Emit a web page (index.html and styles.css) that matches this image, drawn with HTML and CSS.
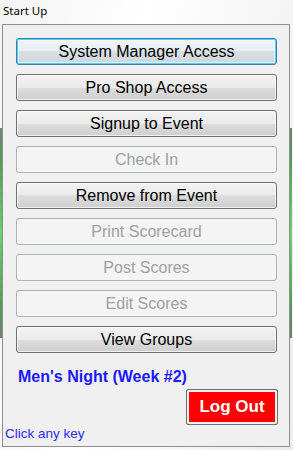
FILE: index.html
```html
<!DOCTYPE html>
<html>
<head>
<meta charset="utf-8">
<link rel="stylesheet" href="styles.css">
</head>
<body>
<div class="window">
  <div class="title">Start Up</div>
  <div class="panel">
    <div class="buttons">
      <button class="btn focus">System Manager Access</button>
      <button class="btn">Pro Shop Access</button>
      <button class="btn">Signup to Event</button>
      <button class="btn disabled">Check In</button>
      <button class="btn">Remove from Event</button>
      <button class="btn disabled">Print Scorecard</button>
      <button class="btn disabled">Post Scores</button>
      <button class="btn disabled">Edit Scores</button>
      <button class="btn">View Groups</button>
    </div>
    <div class="event">Men's Night (Week #2)</div>
    <div class="logout-row"><button class="logout">Log Out</button></div>
    <div class="hint">Click any key</div>
  </div>
</div>
</body>
</html>
```
FILE: styles.css
```css
html, body {
  margin: 0;
  padding: 0;
}
body {
  width: 293px;
  height: 450px;
  overflow: hidden;
  background: linear-gradient(100deg, #f4f4f4 0%, #ffffff 40%, #f7f7f7 70%, #ececec 100%);
  position: relative;
}
body::before, body::after {
  content: "";
  position: absolute;
  top: 128px;
  height: 210px;
  width: 2px;
  background: linear-gradient(180deg, rgba(40,40,40,0.6) 0%, #4fa04f 15%, #6ccf6c 50%, #4fa04f 85%, rgba(40,40,40,0.6) 100%);
}
body::before { left: 0; }
body::after { right: 1px; }
.window {
  display: flex;
  flex-direction: column;
}
.title {
  height: 24px;
  box-sizing: border-box;
  padding: 4px 0 0 3px;
  font-family: "Noto Sans", "DejaVu Sans", sans-serif;
  font-size: 11.5px;
  line-height: 14px;
  color: #000;
}
.panel {
  margin-left: 2px;
  width: 288px;
  height: 423px;
  box-sizing: border-box;
  border: 1px solid #8e8f8f;
  background: #f0f0f0;
  display: flex;
  flex-direction: column;
  position: relative;
  z-index: 1;
}
.buttons {
  display: flex;
  flex-direction: column;
  gap: 9px;
  padding: 13px 0 0 13px;
}
.btn {
  width: 261px;
  height: 27px;
  box-sizing: border-box;
  margin: 0;
  padding: 0;
  border: 1px solid #707070;
  border-radius: 3px;
  background: linear-gradient(180deg, #f2f2f2 0%, #ebebeb 50%, #dddddd 50%, #cfcfcf 100%);
  box-shadow: inset 0 0 0 1px rgba(255,255,255,0.7);
  font-family: "Liberation Sans", Arial, sans-serif;
  font-size: 16px;
  line-height: 25px;
  color: #000;
  text-align: center;
}
.btn.focus {
  border-color: #3c7fb1;
  box-shadow: inset 0 0 0 1px #48d2fa, inset 0 0 0 2px rgba(255,255,255,0.5);
  background: linear-gradient(180deg, #f0f5f8 0%, #e6edf1 50%, #d9e0e4 50%, #cfd6da 100%);
}
.btn.disabled {
  border-color: #adb2b5;
  background: #f4f4f4;
  box-shadow: none;
  color: #a0a0a0;
}
.event {
  margin: 14px 0 0 15px;
  font-family: "Liberation Sans", Arial, sans-serif;
  font-weight: bold;
  font-size: 16px;
  line-height: 19px;
  color: #1a1aff;
}
.logout-row {
  display: flex;
  justify-content: flex-end;
  padding-right: 11px;
  margin-top: 3px;
}
.logout {
  width: 92px;
  height: 36px;
  box-sizing: border-box;
  margin: 0;
  padding: 0;
  border: 1px solid #707070;
  border-radius: 2px;
  background: #ff0000;
  box-shadow: inset 0 0 0 2px #f0f0f0;
  font-family: "Liberation Sans", Arial, sans-serif;
  font-weight: bold;
  font-size: 17px;
  color: #fff;
  text-align: center;
}
.hint {
  margin: 1px 0 0 2px;
  font-family: "Liberation Sans", Arial, sans-serif;
  font-size: 13.5px;
  line-height: 15px;
  color: #2a2aff;
}
```
